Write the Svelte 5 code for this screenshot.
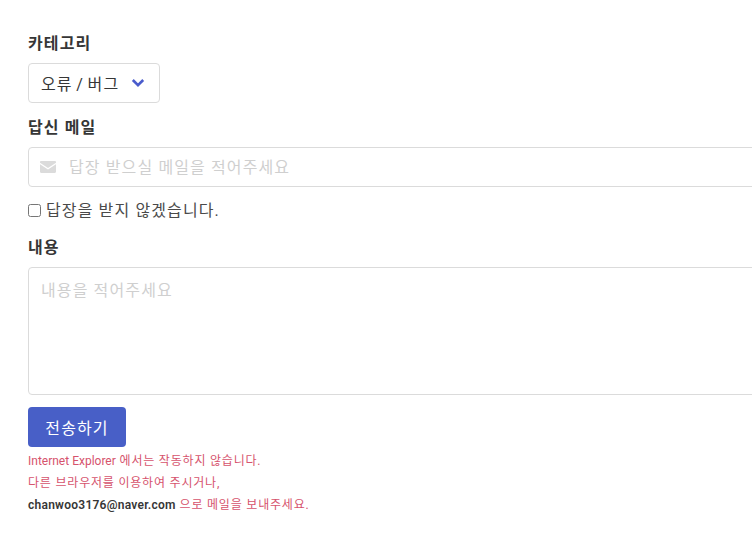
<script lang="ts">
let noReply = $state(false)
</script>

<form class="contact" onsubmit={e => e.preventDefault()}>
  <div class="field">
    <span class="label">카테고리</span>
    <div class="select">
      <span class="select-value">오류 / 버그</span>
      <svg class="chevron" viewBox="0 0 14 10" width="14" height="10" aria-hidden="true">
        <path d="M1.800 2 7 7.200 12.200 2" fill="none" stroke="#4a5ccc" stroke-width="2.600" />
      </svg>
    </div>
  </div>

  <div class="field">
    <span class="label">답신 메일</span>
    <div class="control">
      <svg class="mail" viewBox="0 0 16 12" width="16" height="12" aria-hidden="true">
        <path d="M0 1.200C0 .5.5 0 1.200 0h13.600c.7 0 1.200.5 1.200 1.200v.5L8 7 0 1.700z" fill="#dbdbdb" />
        <path d="M0 3.200V10.800c0 .7.5 1.200 1.200 1.200h13.600c.7 0 1.200-.5 1.200-1.200V3.200L8 8.500z" fill="#dbdbdb" />
      </svg>
      <input class="input" type="text" placeholder="답장 받으실 메일을 적어주세요" />
    </div>
  </div>

  <label class="checkbox">
    <input type="checkbox" bind:checked={noReply} />
    답장을 받지 않겠습니다.
  </label>

  <div class="field">
    <span class="label">내용</span>
    <textarea class="textarea" placeholder="내용을 적어주세요"></textarea>
  </div>

  <button class="submit" type="submit">전송하기</button>

  <div class="notice">
    <p><span class="latin">Internet Explorer</span> 에서는 작동하지 않습니다.</p>
    <p>다른 브라우저를 이용하여 주시거나,</p>
    <p><strong class="latin">chanwoo3176@naver.com</strong> 으로 메일을 보내주세요.</p>
  </div>
</form>

<style>
  :global(body) {
    background: #fff;
    overflow: hidden;
  }

  .contact {
    width: 800px;
    padding: 31px 0 0 28px;
    font-family: Roboto, "Noto Sans CJK KR", sans-serif;
    font-size: 16px;
    letter-spacing: 0.07em;
    color: #4a4a4a;
  }

  .field {
    margin-bottom: 12px;
  }

  .label {
    display: block;
    height: 24px;
    line-height: 26px;
    margin-bottom: 8px;
    font-weight: 700;
    color: #363636;
  }

  .select {
    display: inline-flex;
    align-items: center;
    gap: 12px;
    box-sizing: border-box;
    height: 40px;
    padding: 0 14px 0 12px;
    border: 1px solid #dbdbdb;
    border-radius: 4px;
    color: #363636;
    vertical-align: top;
  }

  .select-value {
    word-spacing: -1.5px;
  }

  .control {
    position: relative;
  }

  .mail {
    position: absolute;
    left: 12px;
    top: 14px;
  }

  .input,
  .textarea {
    display: block;
    box-sizing: border-box;
    width: 100%;
    border: 1px solid #dbdbdb;
    border-radius: 4px;
    font: inherit;
    letter-spacing: inherit;
    color: #363636;
    outline: none;
  }

  .input {
    height: 40px;
    padding: 0 12px 0 40px;
  }

  .textarea {
    height: 128px;
    padding: 11px 12px;
    line-height: 24px;
    resize: none;
  }

  .input::placeholder,
  .textarea::placeholder {
    color: #cfcfcf;
    opacity: 1;
  }

  .checkbox {
    display: flex;
    align-items: center;
    gap: 5px;
    height: 24px;
    margin-bottom: 12px;
    line-height: 24px;
    color: #4a4a4a;
  }

  .checkbox input {
    width: 13px;
    height: 13px;
    margin: 0 0 2px;
  }

  .submit {
    display: block;
    width: 98px;
    height: 40px;
    padding: 0;
    border: none;
    border-radius: 4px;
    background: #485fc7;
    color: #fff;
    font: inherit;
    letter-spacing: inherit;
  }

  .notice {
    margin-top: 3px;
    font-size: 12px;
    line-height: 22px;
    letter-spacing: 0.8px;
    color: #d6536d;
  }

  .notice p {
    margin: 0;
  }

  .latin {
    letter-spacing: 0;
  }

  .notice strong {
    letter-spacing: 0.25px;
    color: #363636;
    font-weight: 600;
  }
</style>
